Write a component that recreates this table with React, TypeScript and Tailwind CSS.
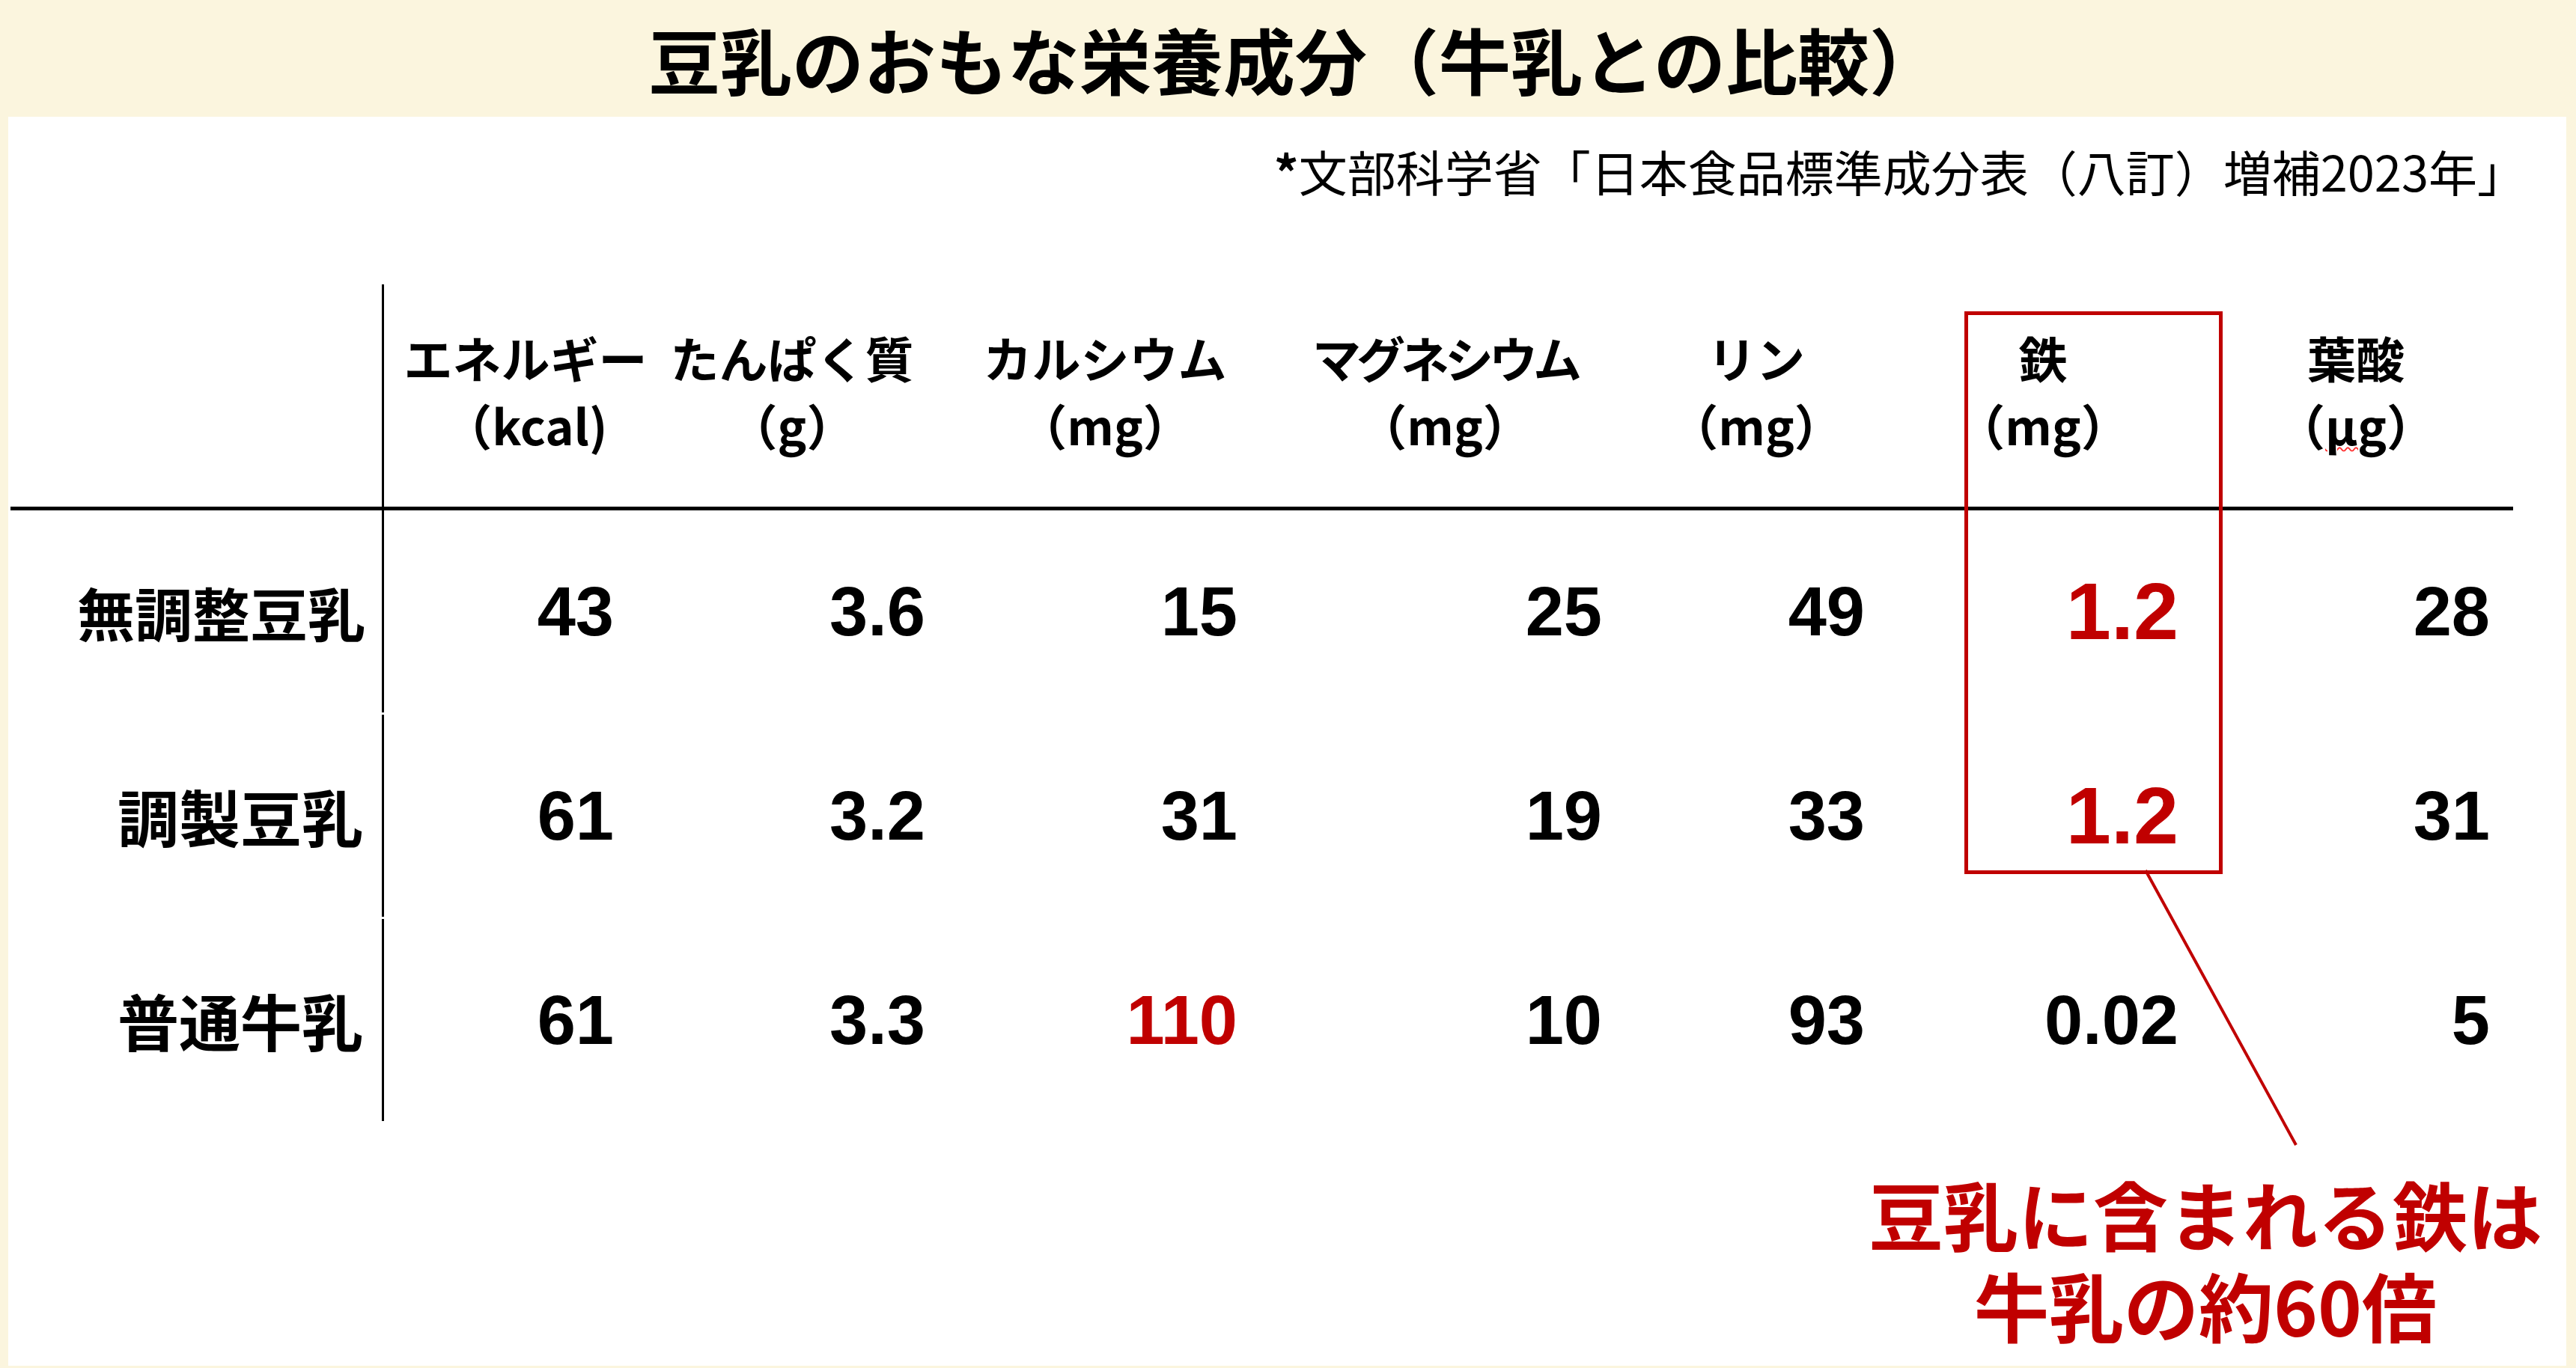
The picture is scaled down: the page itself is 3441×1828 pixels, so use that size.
import React from "react";

type Col = {
  name: string;
  unit: string;
  width: string;
  head: string;
  num: string;
  tight?: boolean;
  wavy?: boolean;
};

const cols: Col[] = [
  { name: "エネルギー", unit: "（kcal)", width: "w-[367px]", head: "pl-[11px]", num: "pr-[60px]" },
  { name: "たんぱく質", unit: "（g）", width: "w-[410px]", head: "pr-[54px]", num: "pr-[54px]" },
  { name: "カルシウム", unit: "（mg）", width: "w-[420px]", head: "pr-[48px]", num: "pr-[57px]" },
  { name: "マグネシウム", unit: "（mg）", width: "w-[440px]", head: "pr-[0px]", num: "pr-[10px]", tight: true },
  { name: "リン", unit: "（mg）", width: "w-[474px]", head: "pr-[82px]", num: "pr-[133px]" },
  { name: "鉄", unit: "（mg）", width: "w-[345px]", head: "pr-[135px]", num: "pr-[59px]" },
  { name: "葉酸", unit: "（µg）", width: "w-[388px]", head: "pr-[32px]", num: "pr-[31px]", wavy: true },
];

// value, highlighted in red, bigger
type Cell = { v: string; red?: boolean; big?: boolean };

const rows: { label: string; size: string; cells: Cell[] }[] = [
  {
    label: "無調整豆乳",
    size: "text-[77px] pr-[22px]",
    cells: [{ v: "43" }, { v: "3.6" }, { v: "15" }, { v: "25" }, { v: "49" }, { v: "1.2", red: true, big: true }, { v: "28" }],
  },
  {
    label: "調製豆乳",
    size: "text-[82px] pr-[25px]",
    cells: [{ v: "61" }, { v: "3.2" }, { v: "31" }, { v: "19" }, { v: "33" }, { v: "1.2", red: true, big: true }, { v: "31" }],
  },
  {
    label: "普通牛乳",
    size: "text-[82px] pr-[25px]",
    cells: [{ v: "61" }, { v: "3.3" }, { v: "110", red: true }, { v: "10" }, { v: "93" }, { v: "0.02" }, { v: "5" }],
  },
];

export default function App() {
  return (
    <div className="relative w-[3441px] h-[1828px] bg-[#fbf5de] text-black font-['Noto_Sans_CJK_JP',sans-serif] overflow-hidden">
      <div className="h-[156px] flex items-center justify-center pl-[18px]">
        <h1 className="text-[96px] leading-none font-bold">豆乳のおもな栄養成分（牛乳との比較）</h1>
      </div>

      <div className="ml-[11px] mr-[13px] h-[1669px] bg-white flex flex-col">
        <div className="pt-[40px] pr-[54px] text-right text-[65px] leading-none">
          <span className="font-bold">*</span>文部科学省「日本食品標準成分表（八訂）増補2023年」
        </div>

        <div className="mt-[119px] ml-[3px] w-[3343px] flex flex-col">
          {/* header */}
          <div className="flex h-[302px] border-b-[5px] border-black">
            <div className="w-[499px] border-r-[3px] border-black" />
            {cols.map((c) => (
              <div key={c.name} className={`${c.width} ${c.head} pb-[14px] flex flex-col items-center justify-center text-[65px] leading-[90px] font-bold`}>
                <div className={c.tight ? "tracking-[-6px]" : ""}>{c.name}</div>
                <div>
                  {c.wavy ? (
                    <>
                      （<span className="underline decoration-wavy decoration-[#ff3030] decoration-[2px] underline-offset-[2px]">µg</span>）
                    </>
                  ) : (
                    c.unit
                  )}
                </div>
              </div>
            ))}
          </div>

          {/* body */}
          <div className="flex flex-col gap-[3px]">
            {rows.map((r) => (
              <div key={r.label} className="flex h-[270px]">
                <div className={`w-[499px] border-r-[3px] border-black flex items-center justify-end leading-none font-bold ${r.size}`}>
                  {r.label}
                </div>
                {r.cells.map((cell, i) => (
                  <div
                    key={i}
                    className={`${cols[i].width} ${cols[i].num} flex items-center justify-end font-['Liberation_Sans',Arial,sans-serif] font-bold leading-none ${
                      cell.big ? "text-[108px]" : "text-[92px]"
                    } ${cell.red ? "text-[#c00000]" : "text-black"}`}
                  >
                    {cell.v}
                  </div>
                ))}
              </div>
            ))}
          </div>
        </div>

        <div className="mt-[62px] flex justify-end pr-[32px]">
          <div className="w-[900px] text-center text-[100px] leading-[122px] font-bold text-[#c00000]">
            <div>豆乳に含まれる鉄は</div>
            <div>牛乳の約60倍</div>
          </div>
        </div>
      </div>

      {/* highlight box around iron column */}
      <div className="absolute left-[2624px] top-[416px] w-[345px] h-[752px] border-[5px] border-[#c00000]" />

      {/* leader line */}
      <svg className="absolute inset-0 pointer-events-none" width="3441" height="1828">
        <line x1="2866" y1="1163" x2="3067" y2="1530" stroke="#c00000" strokeWidth="4" />
      </svg>
    </div>
  );
}
